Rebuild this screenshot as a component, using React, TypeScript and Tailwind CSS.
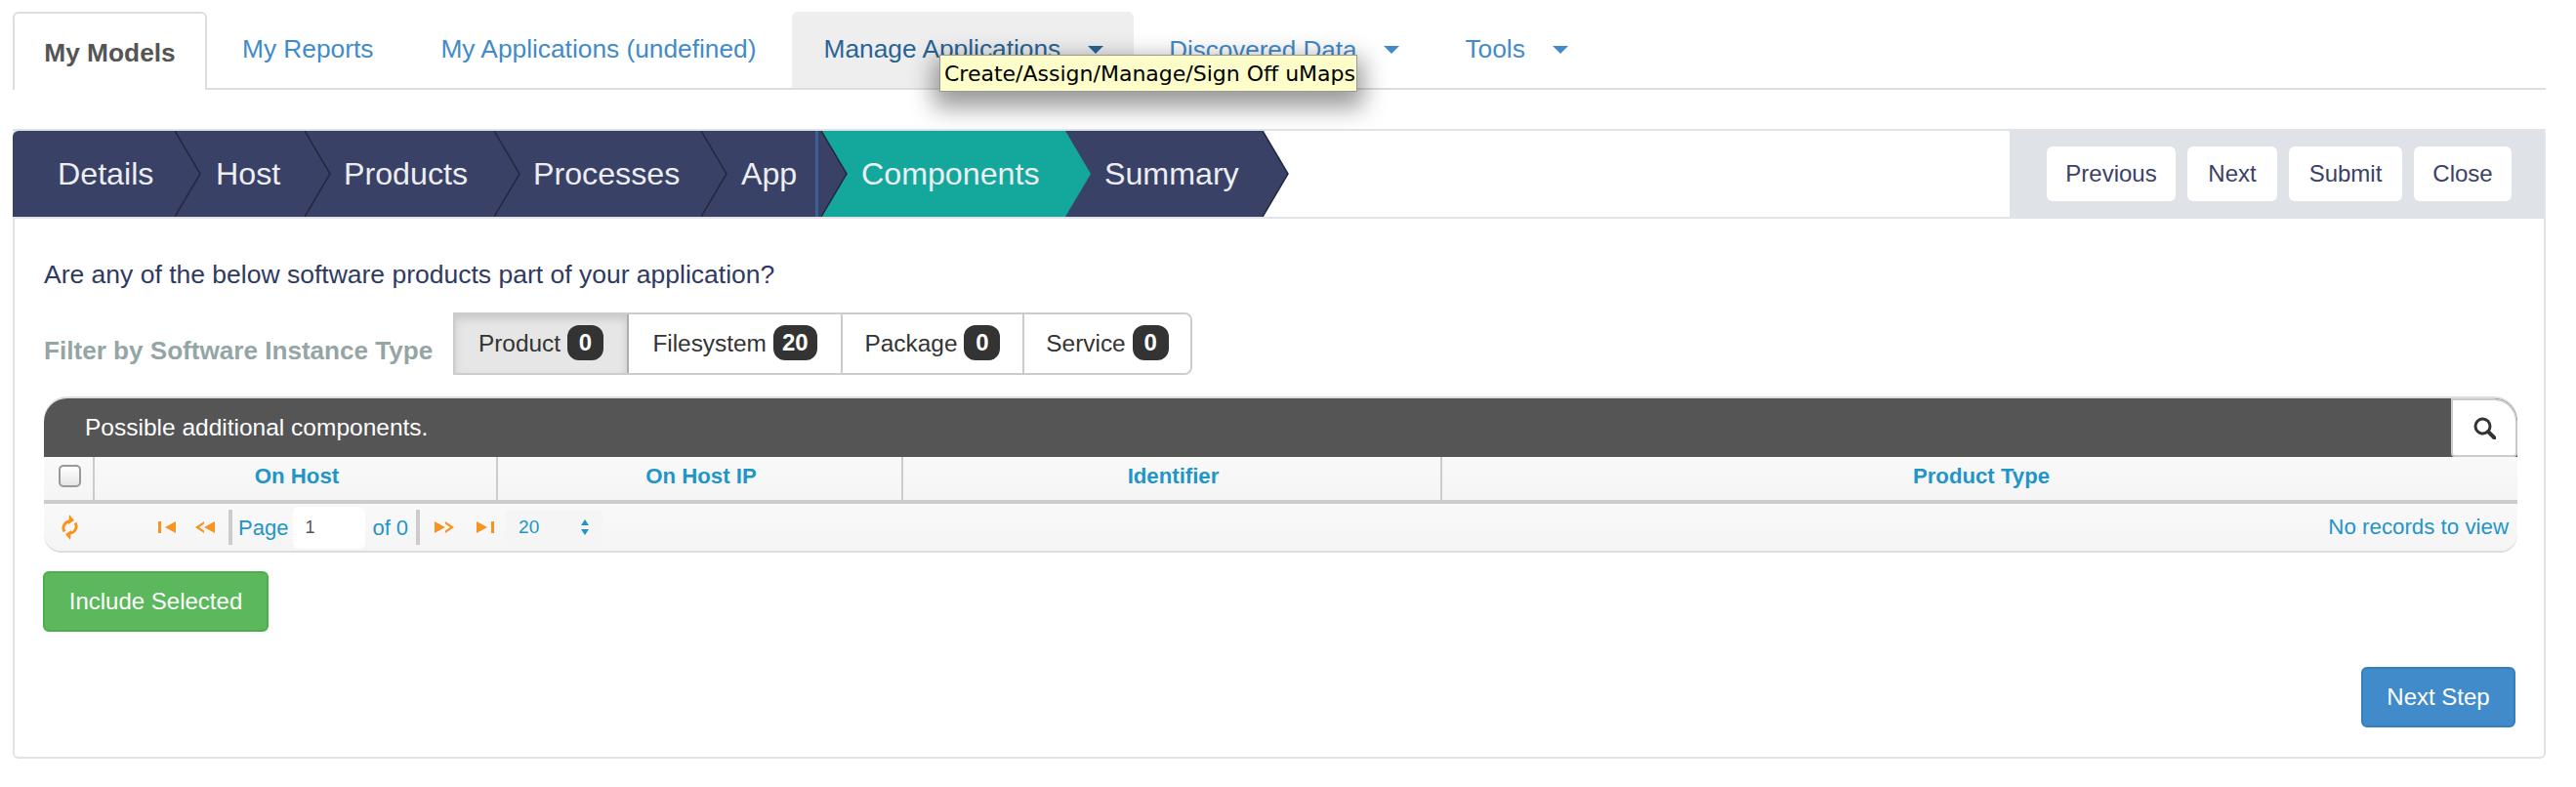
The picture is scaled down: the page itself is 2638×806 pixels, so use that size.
const sans = "font-['Liberation_Sans',Arial,sans-serif]";

function Caret() {
	return <span className="ml-[28px] inline-block h-0 w-0 border-x-[8px] border-t-[8px] border-x-transparent border-t-current"></span>;
}

function Tab(props: { label: string; active?: boolean; hover?: boolean; caret?: boolean; extra?: string }) {
	if (props.active) {
		return (
			<div className="-mb-[2px] flex h-[80px] w-[199px] items-center justify-center rounded-t-[6px] border-2 border-b-0 border-[#ddd] bg-white pt-[3px] font-bold text-[#555]">
				{props.label}
			</div>
		);
	}
	return (
		<div
			className={`flex h-[78px] items-center rounded-t-[6px] pl-[33px] ${props.caret ? "pr-[31px]" : "pr-[33px]"} ${
				props.hover ? "bg-[#eee] text-[#2a6496]" : "text-[#428bca]"
			} ${props.extra ?? ""}`}
		>
			{props.label}
			{props.caret && <Caret />}
		</div>
	);
}

function Step(props: { label: string; width: string; active?: boolean; pad: string; z: string }) {
	return (
		<div className={`relative flex h-full items-center text-[32.2px] text-[#eceef2] ${props.width} ${props.pad} ${props.z} ${props.active ? "bg-[#14a89c]" : "bg-[#3a4166]"}`}>
			{props.label}
			<svg className="absolute left-full top-0" width="27" height="88" viewBox="0 0 27 88">
				<polygon points="0,0 26,44 0,88" fill={props.active ? "#14a89c" : "#3a4166"} />
				<polyline points="0,0 26,44 0,88" fill="none" stroke="#23273f" strokeWidth="1.5" className={props.active ? "hidden" : ""} />
			</svg>
		</div>
	);
}

function FilterButton(props: { label: string; count: number; active?: boolean; width: string }) {
	return (
		<div
			className={`flex h-full items-center justify-center gap-[7px] border-r-2 last:border-r-0 ${props.width} ${
				props.active ? "border-[#adadad] bg-[#e6e6e6] shadow-[inset_0_5px_8px_rgba(0,0,0,0.125)]" : "border-[#ccc] bg-white"
			}`}
		>
			<span>{props.label}</span>
			<span className="flex h-[36px] min-w-[37px] -translate-y-[1px] items-center justify-center rounded-[12px] bg-[#333] px-[9px] text-[24px] font-bold leading-none text-white">{props.count}</span>
		</div>
	);
}

function Th(props: { label: string; width: string }) {
	return <div className={`flex h-full items-center justify-center border-r-2 border-[#ccc] pb-[5px] pl-[3px] last:border-r-0 ${props.width}`}>{props.label}</div>;
}

function Btn(props: { label: string; width: string }) {
	return <div className={`flex h-[56px] items-center justify-center rounded-[6px] bg-white text-[24px] text-[#3a4166] ${props.width}`}>{props.label}</div>;
}

const orange = "#f7931e";

function PagerIcon(props: { kind: "first" | "prev" | "next" | "last" }) {
	const flip = props.kind === "next" || props.kind === "last";
	const bar = props.kind === "first" || props.kind === "last";
	return (
		<svg width={bar ? 19 : 23} height="12" viewBox={bar ? "0 0 19 12" : "0 0 23 12"} className={flip ? "-scale-x-100" : ""}>
			{bar ? (
				<>
					<rect x="0" y="0" width="3" height="12" fill={orange} />
					<polygon points="18,0 18,12 7,6" fill={orange} />
				</>
			) : (
				<>
					<polygon points="22,0 22,12 11,6" fill={orange} />
					<polygon points="11,0 2,6 11,12 11,9.5 6,6 11,2.5" fill={orange} />
				</>
			)}
		</svg>
	);
}

function Refresh() {
	return (
		<svg width="21" height="26" viewBox="0 0 21 26" fill="none" stroke={orange} strokeWidth="2.8">
			<path d="M11 7 A6.8 6.8 0 0 0 5 17.5" />
			<path d="M10 19 A6.8 6.8 0 0 0 16 8.5" />
			<polygon points="10,0 15,6 9,10" fill={orange} stroke="none" />
			<polygon points="11,26 6,20 12,16" fill={orange} stroke="none" />
		</svg>
	);
}

function SearchIcon() {
	return (
		<svg width="23" height="23" viewBox="0 0 23 23" fill="none" stroke="#333">
			<circle cx="9.5" cy="9.5" r="7.5" strokeWidth="3" />
			<line x1="15" y1="15" x2="21.5" y2="21.5" strokeWidth="4" strokeLinecap="round" />
		</svg>
	);
}

export default function App() {
	return (
		<div className={`relative min-h-screen bg-white pl-[13px] pr-[31px] pt-[12px] text-[26px] ${sans}`}>
			{/* top tabs */}
			<div className="flex h-[80px] gap-[3px] border-b-2 border-[#ddd] text-[26.3px]">
				<Tab label="My Models" active />
				<Tab label="My Reports" />
				<Tab label="My Applications (undefined)" />
				<Tab label="Manage Applications" hover caret />
				<Tab label="Discovered Data" caret extra="text-[26px]" />
				<Tab label="Tools" caret />
			</div>

			{/* tooltip for hovered tab */}
			<div className="absolute left-[962px] top-[56px] z-20 flex h-[38px] w-[428px] items-center whitespace-nowrap border border-[#999] bg-[#fdfdc9] pl-[4px] font-['DejaVu_Sans',sans-serif] text-[22px] text-black shadow-[0_10px_24px_6px_rgba(0,0,0,0.4)]">
				Create/Assign/Manage/Sign Off uMaps
			</div>

			{/* wizard card */}
			<div className="mt-[40px] h-[645px] rounded-[6px] border-2 border-t-0 border-[#e0e3e8]">
				<div className="-mx-[2px] flex h-[92px] border-t-2 border-b-2 border-[#e0e3e8]">
					<div className="flex h-[88px] flex-1 overflow-hidden rounded-tl-[6px] bg-white">
						<Step label="Details" width="w-[166px]" pad="pl-[46px]" z="z-[7]" />
						<Step label="Host" width="w-[133px]" pad="pl-[42px]" z="z-[6]" />
						<Step label="Products" width="w-[194px]" pad="pl-[40px]" z="z-[5]" />
						<Step label="Processes" width="w-[212px]" pad="pl-[40px]" z="z-[4]" />
						<div className="z-[3] flex h-full">
							<div className="flex h-full w-[117px] items-center bg-[#3a4166] pl-[41px] text-[32.2px] text-[#eceef2]">App</div>
							<div className="h-full w-[3px] bg-[#3f5f96]"></div>
							<Step label="" width="w-[3px]" pad="" z="z-[3]" />
						</div>
						<Step label="Components" width="w-[250px]" pad="pl-[41px]" z="z-[2]" active />
						<Step label="Summary" width="w-[202px]" pad="pl-[40px]" z="z-[1]" />
					</div>
					<div className="-my-[2px] flex h-[92px] items-center gap-[12px] rounded-tr-[6px] bg-[#dfe2e7] pl-[38px] pr-[35px]">
						<Btn label="Previous" width="w-[132px]" />
						<Btn label="Next" width="w-[92px]" />
						<Btn label="Submit" width="w-[116px]" />
						<Btn label="Close" width="w-[100px]" />
					</div>
				</div>

				<div className="pl-[30px] pr-[27px]">
					<div className="pt-[42px] text-[26.5px] leading-[30px] text-[#2f3a60]">Are any of the below software products part of your application?</div>

					<div className="mt-[24px] flex items-center">
						<div className="w-[419px] pt-[15px] text-[26.1px] font-bold text-[#95a5a6]">Filter by Software Instance Type</div>
						<div className="flex h-[64px] overflow-hidden rounded-r-[8px] border-2 border-[#ccc] text-[24.4px] text-[#333]">
							<FilterButton label="Product" count={0} active width="w-[178px]" />
							<FilterButton label="Filesystem" count={20} width="w-[219px]" />
							<FilterButton label="Package" count={0} width="w-[186px]" />
							<FilterButton label="Service" count={0} width="w-[170px]" />
						</div>
					</div>

					{/* jqgrid */}
					<div className="mt-[24px] w-[2533px] rounded-t-[24px] rounded-b-[18px] bg-[#f8f8f8] shadow-[0_-2px_0_#ddd,0_2px_0_#ddd]">
						<div className="flex h-[60px] items-center justify-between overflow-hidden rounded-t-[24px] bg-[#555] pl-[42px] text-[24.5px] text-white">
							Possible additional components.
							<div className="flex h-full w-[68px] items-center justify-center rounded-tr-[24px] rounded-b-[4px] border-2 border-[#ccc] bg-white">
								<SearchIcon />
							</div>
						</div>
						<div className="flex h-[48px] border-b-4 border-[#ccc] bg-gradient-to-b from-[#f9f9f9] to-[#f5f5f5] text-[22.2px] font-bold text-[#1f95c8]">
							<div className="flex h-full w-[52px] items-center justify-center border-r-2 border-[#ccc] pb-[5px] pl-[2px]">
								<div className="h-[23px] w-[23px] rounded-[5px] border-2 border-[#999] bg-gradient-to-b from-white to-[#e6e6e6]"></div>
							</div>
							<Th label="On Host" width="w-[413px]" />
							<Th label="On Host IP" width="w-[415px]" />
							<Th label="Identifier" width="w-[552px]" />
							<Th label="Product Type" width="flex-1" />
						</div>
						<div className="flex h-[48px] items-center rounded-b-[18px] bg-gradient-to-b from-[#f9f9f9] to-[#f5f5f5] text-[22px] text-[#1f95c8]">
							<div className="ml-[16px] flex w-[101px]"><Refresh /></div>
							<PagerIcon kind="first" />
							<div className="ml-[17px]"><PagerIcon kind="prev" /></div>
							<div className="ml-[13px] h-[36px] w-[4px] bg-[#ccc]"></div>
							<span className="ml-[6px]">Page</span>
							<div className="ml-[5px] flex h-[43px] w-[74px] items-center rounded-[6px] bg-white pl-[12px] text-[18px] text-[#555]">1</div>
							<span className="ml-[7px]">of 0</span>
							<div className="ml-[8px] h-[36px] w-[4px] bg-[#ccc]"></div>
							<div className="ml-[14px]"><PagerIcon kind="next" /></div>
							<div className="ml-[20px]"><PagerIcon kind="last" /></div>
							<div className="ml-[12px] flex h-[36px] w-[99px] items-center justify-between rounded-[6px] bg-[#f5f5f5] pl-[13px] pr-[14px] text-[19px]">
								20
								<svg width="8" height="16" viewBox="0 0 8 16" fill="#1f95c8">
									<polygon points="4,0 8,6 0,6" />
									<polygon points="4,16 8,10 0,10" />
								</svg>
							</div>
							<span className="ml-auto pr-[9px] text-[22.3px]">No records to view</span>
						</div>
					</div>

					<div className="-ml-[1px] mt-[21px] flex h-[62px] w-[231px] items-center justify-center rounded-[6px] border-2 border-[#4cae4c] bg-[#5cb85c] text-[24px] text-white">Include Selected</div>
					<div className="mt-[36px] flex justify-end pr-[2px]">
						<div className="flex h-[62px] w-[158px] items-center justify-center rounded-[6px] border-2 border-[#357ebd] bg-[#428bca] text-[24px] text-white">Next Step</div>
					</div>
				</div>
			</div>
		</div>
	);
}
